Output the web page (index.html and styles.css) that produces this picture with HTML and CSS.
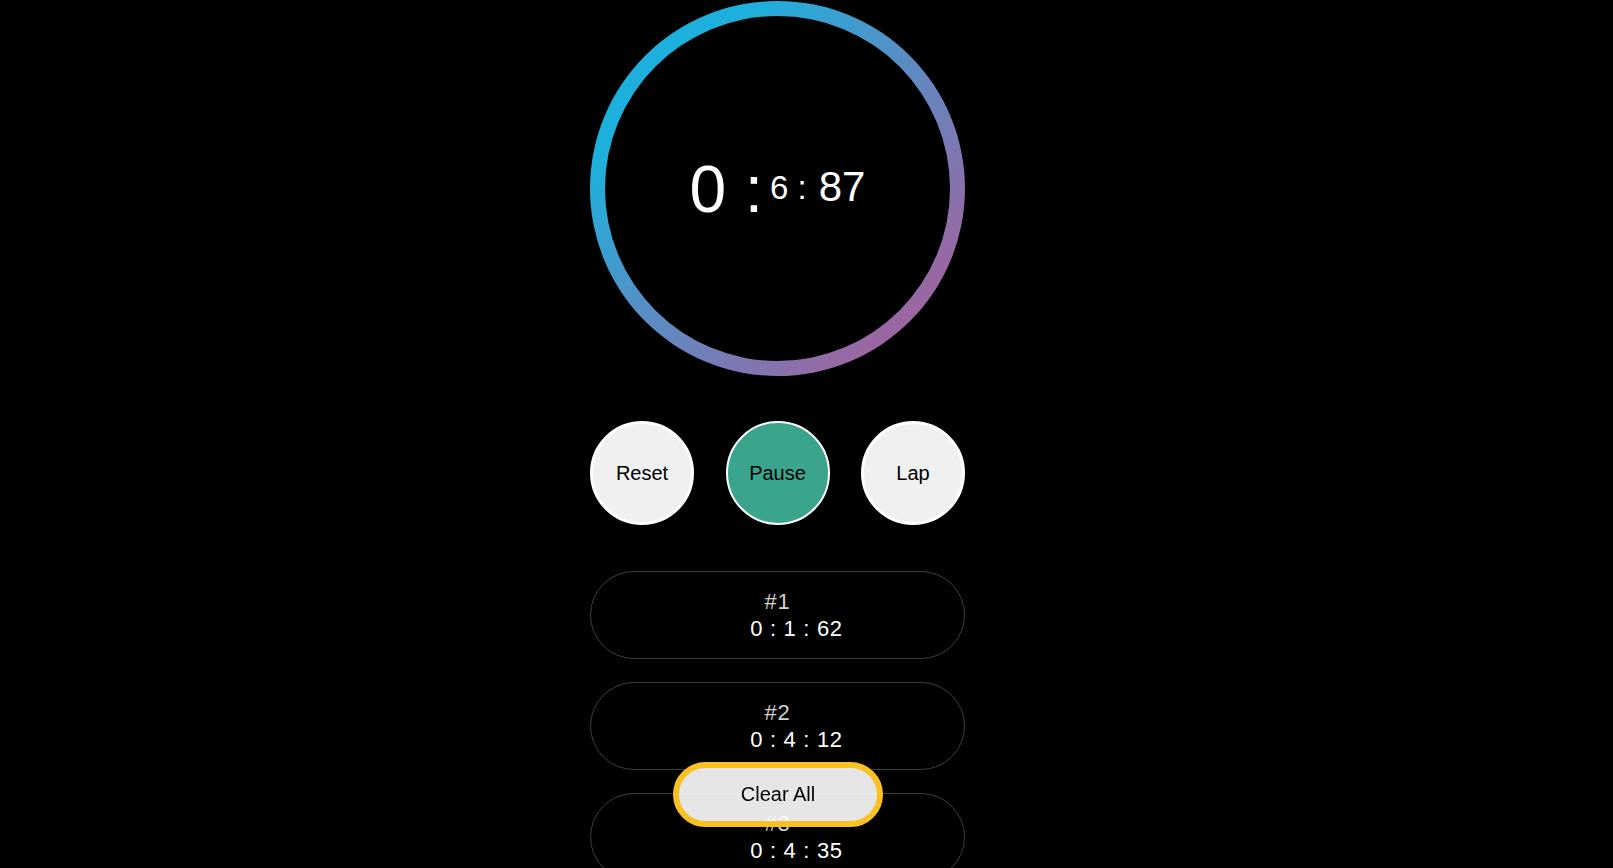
FILE: index.html
```html
<!DOCTYPE html>
<html lang="en">
<head>
<meta charset="utf-8">
<title>Stopwatch</title>
<link rel="stylesheet" href="styles.css">
</head>
<body>
<main class="app">
  <div class="dial">
    <div class="dial-inner">
      <span class="t-min">0 :</span>
      <span class="t-sec">6 :</span>
      <span class="t-ms">87</span>
    </div>
  </div>

  <div class="controls">
    <button class="ctrl">Reset</button>
    <button class="ctrl ctrl-active">Pause</button>
    <button class="ctrl">Lap</button>
  </div>

  <ul class="laps">
    <li class="lap">
      <span class="lap-no">#1</span>
      <span class="lap-time">0 : 1 : 62</span>
    </li>
    <li class="lap">
      <span class="lap-no">#2</span>
      <span class="lap-time">0 : 4 : 12</span>
    </li>
    <li class="lap">
      <span class="lap-no">#3</span>
      <span class="lap-time">0 : 4 : 35</span>
    </li>
  </ul>

  <button class="clear">Clear All</button>
</main>
</body>
</html>
```

FILE: styles.css
```css
html, body {
  margin: 0;
  padding: 0;
  background: #000;
  height: 100%;
  overflow: hidden;
}

body {
  font-family: "Liberation Sans", Arial, sans-serif;
  color: #fff;
}

.app {
  width: 1555px;
  display: flex;
  flex-direction: column;
  align-items: center;
  padding-top: 1px;
}

.dial {
  width: 375px;
  height: 375px;
  border-radius: 50%;
  padding: 15px;
  box-sizing: border-box;
  background: linear-gradient(135deg, #1eb0dc 22%, #5a8cc4 50%, #9a67a2 84%);
}

.dial-inner {
  width: 100%;
  height: 100%;
  border-radius: 50%;
  background: #000;
  display: flex;
  align-items: center;
  justify-content: center;
}

.t-min {
  font-size: 66px;
  line-height: 1;
  white-space: pre;
}

.t-sec {
  font-size: 33px;
  line-height: 1;
  margin-left: 7px;
  margin-top: -2px;
  white-space: pre;
}

.t-ms {
  font-size: 42px;
  line-height: 1;
  margin-left: 12px;
  margin-top: -3px;
}

.controls {
  width: 375px;
  display: flex;
  justify-content: space-between;
  margin-top: 45px;
}

.ctrl {
  width: 104px;
  height: 104px;
  border-radius: 50%;
  border: 3px solid #fff;
  background: #f0f0f0;
  color: #000;
  font-family: "Liberation Sans", Arial, sans-serif;
  font-size: 20px;
  padding: 0;
}

.ctrl-active {
  background: #3aa58c;
  border-width: 2px;
}

.laps {
  list-style: none;
  margin: 46px 0 0;
  padding: 0;
  width: 375px;
  display: flex;
  flex-direction: column;
  gap: 23px;
}

.lap {
  height: 88px;
  box-sizing: border-box;
  border: 1px solid #3f3f3f;
  border-radius: 44px;
  display: flex;
  flex-direction: column;
  align-items: center;
  justify-content: center;
  font-size: 22px;
  line-height: 27px;
  letter-spacing: 0.7px;
}

.lap-no {
  color: #d2d2d2;
}

.lap-time {
  color: #fff;
  padding-left: 38px;
}

.clear {
  position: fixed;
  left: 673px;
  bottom: 41px;
  width: 210px;
  height: 65px;
  border-radius: 33px;
  border: 6px solid #fbc021;
  background: rgba(255, 255, 255, 0.9);
  color: #000;
  font-family: "Liberation Sans", Arial, sans-serif;
  font-size: 20px;
  padding: 0;
}
```
